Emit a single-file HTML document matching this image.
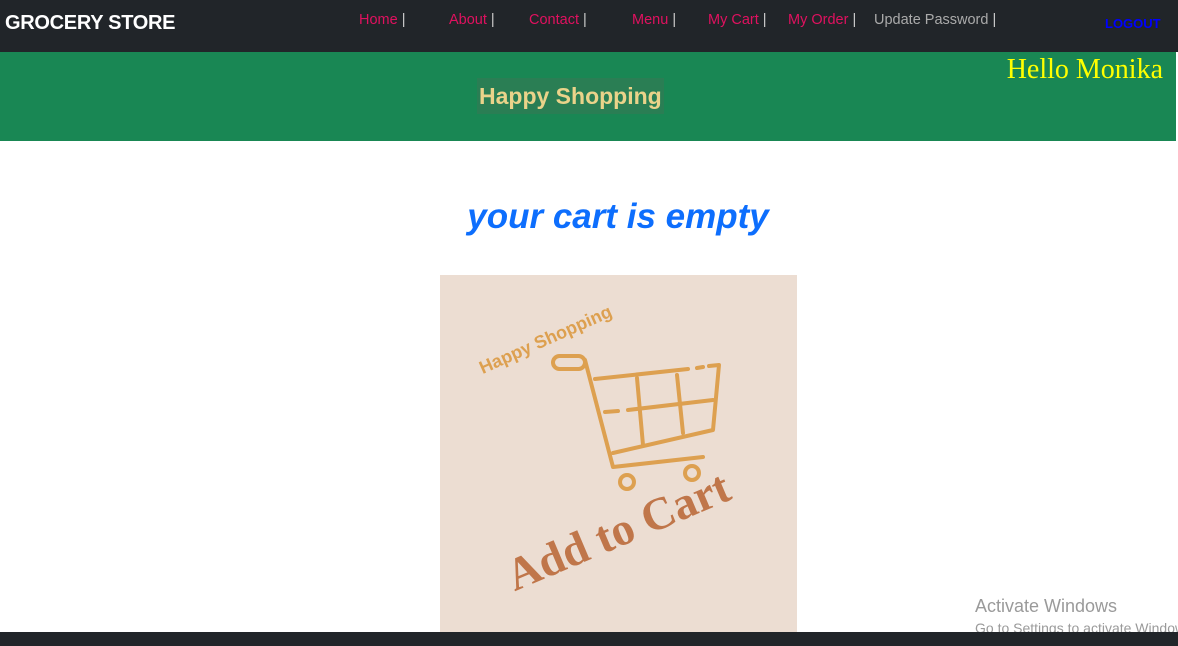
<!DOCTYPE html>
<html><head><meta charset="utf-8"><style>
body{margin:0;width:1178px;height:646px;overflow:hidden;background:#fff;font-family:"Liberation Sans",sans-serif;position:relative}
.nav{position:absolute;left:0;top:0;width:1178px;height:52px;background:#212529}
.brand{position:absolute;left:5px;top:12px;color:#fff;font-weight:bold;font-size:20px;letter-spacing:-0.3px}
.nav a{position:absolute;top:12px;font-size:14.5px;color:#e0115f;text-decoration:none;white-space:nowrap}
.nav a span{color:#ccc}
.hero{position:absolute;left:0;top:52px;width:1176px;height:89px;background:#198754}
.hs{position:absolute;left:477px;top:78px;padding:2px 2px;background:#2a7e54;color:#ead38a;font-weight:bold;font-size:23px;line-height:32px}
.hello{position:absolute;right:15px;top:54px;color:#ffff00;font-family:"Liberation Serif",serif;font-size:28px}
h1{position:absolute;left:0;width:1236px;text-align:center;top:197px;margin:0;color:#0d6efd;font-style:italic;font-weight:bold;font-size:35px}
.img{position:absolute;left:440px;top:275px;width:357px;height:357px;background:#ecddd2;overflow:hidden}
.foot{position:absolute;left:0;top:632px;width:1178px;height:14px;background:#212529}
.act{position:absolute;left:975px;top:596px;color:#9a9a9a;font-size:18px}
.act2{position:absolute;left:975px;top:620px;color:#9a9a9a;font-size:14px;white-space:nowrap}
</style></head><body>
<div class="nav">
<div class="brand">GROCERY STORE</div>
<a style="left:359px">Home <span>|</span></a>
<a style="left:449px">About <span>|</span></a>
<a style="left:529px">Contact <span>|</span></a>
<a style="left:632px">Menu <span>|</span></a>
<a style="left:708px">My Cart <span>|</span></a>
<a style="left:788px">My Order <span>|</span></a>
<a style="left:874px;color:#aaa">Update Password <span>|</span></a>
<a style="left:1105px;top:16px;color:#0000ff;font-weight:bold;font-size:13px">LOGOUT</a>
</div>
<div class="hero"></div>
<div class="hs">Happy Shopping</div>
<div class="hello">Hello Monika</div>
<h1>your cart is empty</h1>
<div class="img">
<svg width="357" height="357" viewBox="440 275 357 357" style="position:absolute;left:0;top:0">
<g fill="none" stroke="#dda050" stroke-width="4" stroke-linecap="round" stroke-linejoin="round">
<rect x="553" y="356" width="32" height="13" rx="6.5"/>
<path d="M585 360 L613 467 L703 457"/>
<path d="M595 379 L688 369 M697 368 L703 367 M709 366 L719 365 L713 430 L613 453"/>
<path d="M605 412 L618 411 M628 410 L713 400"/>
<path d="M637 378 L643 445 M677 375 L683 433"/>
<circle cx="627" cy="482" r="7"/><circle cx="692" cy="473" r="7"/>
</g>
<text x="548" y="345" transform="rotate(-24 548 345)" text-anchor="middle" fill="#dda050" font-family="Liberation Sans,sans-serif" font-weight="bold" font-size="18">Happy Shopping</text>
<text x="624" y="545" transform="rotate(-23 624 545)" text-anchor="middle" fill="#c0764a" font-family="Liberation Serif,serif" font-weight="bold" font-size="46">Add to Cart</text>
</svg>
</div>
<div class="act">Activate Windows</div>
<div class="act2">Go to Settings to activate Windows.</div>
<div class="foot"></div>
</body></html>
